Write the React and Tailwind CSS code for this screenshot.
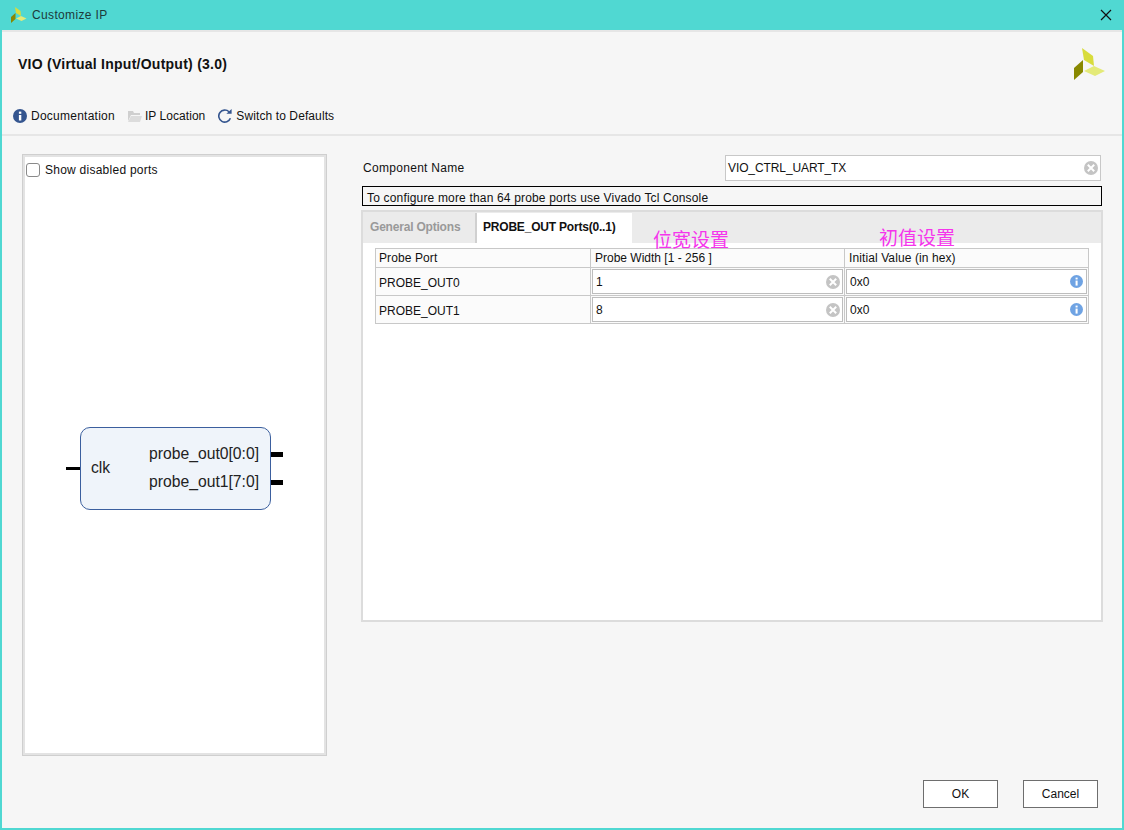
const XLogo = ({ className }) => (
  <svg viewBox="0 0 32 32" className={className}>
    <polygon points="8,0 19,8 20,18 10,12" fill="#d8dc3c" />
    <polygon points="10,23 20,18 31,23 21,28" fill="#e4ea78" />
    <polygon points="0,20 9,12 9,24 0,32" fill="#888800" />
  </svg>
);

const ClearIcon = () => (
  <svg viewBox="0 0 14 14" className="w-[14px] h-[14px] shrink-0">
    <circle cx="7" cy="7" r="7" fill="#c4c4c4" />
    <path d="M3.8 3.8 10.2 10.2M10.2 3.8 3.8 10.2" stroke="#fff" strokeWidth="2" />
  </svg>
);

const InfoBlue = () => (
  <svg viewBox="0 0 14 14" className="w-[13px] h-[13px] shrink-0">
    <circle cx="7" cy="7" r="7" fill="#6fa3e3" />
    <rect x="6" y="6" width="2.2" height="5.4" fill="#fff" />
    <rect x="6" y="2.8" width="2.2" height="2" fill="#fff" />
  </svg>
);

const Cell = ({ value, icon, pad }) => (
  <div className={`m-[1px] h-[25px] border border-[#bdbdbd] bg-white flex items-center justify-between pl-[3px] ${pad}`}>
    <span>{value}</span>
    {icon}
  </div>
);

const rows = [
  { port: "PROBE_OUT0", width: "1" },
  { port: "PROBE_OUT1", width: "8" },
];

export default function App() {
  return (
    <div className="w-[1124px] h-[830px] bg-[#f6f6f6] text-[12px] text-[#111] overflow-hidden flex flex-col border-l-[2px] border-r-[2px] border-b-[2px] border-[#50d8d2]" style={{ fontFamily: '"Liberation Sans", "Noto Sans CJK SC", sans-serif' }}>
      <div className="h-[30px] shrink-0 bg-[#50d8d2] flex items-center justify-between pl-[9px] pr-[10px]">
        <div className="flex items-center gap-[5px]">
          <XLogo className="w-[16px] h-[16px]" />
          <span className="text-[#1d3a3a] tracking-[0.35px]">Customize IP</span>
        </div>
        <svg viewBox="0 0 12 12" className="w-[12px] h-[12px]">
          <path d="M1 1 11 11M11 1 1 11" stroke="#111" strokeWidth="1.2" />
        </svg>
      </div>
      <div className="h-[2px] shrink-0 bg-[#e6e6e6]" />

      <div className="h-[72px] shrink-0 flex justify-between pl-[16px] pr-[16px]">
        <div className="font-bold text-[14px] text-[#111] pt-[22px] tracking-[0.25px]">VIO (Virtual Input/Output) (3.0)</div>
        <XLogo className="w-[32px] h-[32px] mt-[16px]" />
      </div>

      <div className="h-[32px] shrink-0 flex items-center pl-[11px] pb-[6px] border-b-2 border-[#e6e6e6]">
        <div className="flex items-center gap-[4px] mr-[12px]">
          <svg viewBox="0 0 14 14" className="w-[14px] h-[14px]">
            <circle cx="7" cy="7" r="7" fill="#34558f" />
            <rect x="5.9" y="6" width="2.4" height="5.5" fill="#fff" />
            <rect x="5.9" y="2.6" width="2.4" height="2.2" fill="#fff" />
          </svg>
          <span className="tracking-[0.25px]">Documentation</span>
        </div>
        <div className="flex items-center gap-[3px] mr-[13px]">
          <svg viewBox="0 0 15 14" className="w-[15px] h-[14px]">
            <path d="M1 2h5l1 2h6v2H4L1 12Z" fill="#cfcfcf" />
            <path d="M4 7h11l-2 6H1Z" fill="#dcdcdc" />
          </svg>
          <span className="tracking-[0.05px]">IP Location</span>
        </div>
        <div className="flex items-center gap-[4px]">
          <svg viewBox="0 0 14 14" className="w-[14px] h-[14px]" fill="none">
            <path d="M12.4 9.2A6 6 0 1 1 11 2.8" stroke="#34558f" strokeWidth="1.6" />
            <polygon points="8.4,4.8 13.6,4.8 13.6,0" fill="#34558f" />
          </svg>
          <span className="tracking-[0.1px]">Switch to Defaults</span>
        </div>
      </div>

      <div className="flex-1 flex pl-[20px] pr-[19px] pt-[18px] min-h-0">
        <div className="w-[305px] h-[602px] shrink-0 border border-[#cfcfcf]">
          <div className="h-full border-2 border-[#e3e3e3] bg-white flex flex-col">
            <label className="flex items-center gap-[5px] pl-[1px] pt-[4px] tracking-[0.25px]">
              <span className="w-[14px] h-[14px] rounded-[3px] border border-[#8a8a8a] bg-white" />
              <span>Show disabled ports</span>
            </label>
            <div className="relative flex-1">
              <div className="absolute left-[55px] top-[248px] w-[191px] h-[83px] rounded-[10px] border border-[#3b5f9e] bg-[#eff4fa] flex justify-between items-center pl-[10px] pr-[11px] pb-[2px] text-[15.7px] leading-[22px] text-[#222]">
                <span>clk</span>
                <div className="flex flex-col gap-[6px]">
                  <span>probe_out0[0:0]</span>
                  <span>probe_out1[7:0]</span>
                </div>
              </div>
              <div className="absolute left-[41px] top-[288px] w-[14px] h-[3px] bg-black" />
              <div className="absolute left-[246px] top-[273px] w-[12px] h-[5px] bg-black" />
              <div className="absolute left-[246px] top-[301px] w-[12px] h-[5px] bg-black" />
            </div>
          </div>
        </div>

        <div className="flex-1 ml-[34px] flex flex-col relative">
          <div className="h-[26px] flex items-center justify-between pl-[2px] mt-[1px] mr-[2px]">
            <span className="tracking-[0.3px]">Component Name</span>
            <div className="w-[376px] h-[26px] border border-[#c8c8c8] bg-white flex items-center justify-between pl-[2px] pr-[2px]">
              <span className="tracking-[-0.1px]">VIO_CTRL_UART_TX</span>
              <ClearIcon />
            </div>
          </div>
          <div className="mt-[5px] h-[20px] mx-[1px] border border-black flex items-center pl-[4px] pt-[3px] tracking-[0.17px]">
            To configure more than 64 probe ports use Vivado Tcl Console
          </div>
          <div className="mt-[4px] h-[412px] border-2 border-[#dcdcdc] bg-white flex flex-col">
            <div className="h-[31px] shrink-0 bg-[#ebebeb] flex items-end">
              <div className="w-[114px] h-[30px] border-r-2 border-[#d0d0d0] pl-[7px] pb-[2px] flex items-center font-bold text-[#999] tracking-[-0.2px]">General Options</div>
              <div className="w-[155px] h-[30px] bg-white pl-[6px] pb-[2px] flex items-center font-bold text-[#111] tracking-[-0.2px]">PROBE_OUT Ports(0..1)</div>
            </div>
            <div className="pt-[5px] pl-[12px]">
              <div className="grid grid-cols-[215px_254px_243px] w-[714px] border border-[#c8c8c8] bg-[#fbfbfb]">
                <div className="h-[19px] px-[3px] flex items-center border-r border-b border-[#c8c8c8] tracking-[0.1px]">Probe Port</div>
                <div className="h-[19px] px-[4px] flex items-center border-r border-b border-[#c8c8c8]">Probe Width [1 - 256 ]</div>
                <div className="h-[19px] px-[4px] flex items-center border-b border-[#c8c8c8] tracking-[0.1px]">Initial Value (in hex)</div>
                {rows.map((r, i) => [
                  <div key={r.port} className={`px-[3px] pt-[2px] flex items-center border-r border-[#c8c8c8] ${i === 0 ? "h-[28px] border-b" : "h-[27px]"}`}>{r.port}</div>,
                  <div key={r.port + "w"} className={`border-r border-[#c8c8c8] ${i === 0 ? "h-[28px] border-b" : "h-[27px]"}`}><Cell value={r.width} icon={<ClearIcon />} pad="pr-[2px]" /></div>,
                  <div key={r.port + "v"} className={`border-[#c8c8c8] ${i === 0 ? "h-[28px] border-b" : "h-[27px]"}`}><Cell value="0x0" icon={<InfoBlue />} pad="pr-[3px]" /></div>,
                ])}
              </div>
            </div>
          </div>
          <span className="absolute left-[292px] top-[76px] text-[19px] leading-[22px] text-[#f535ec]">位宽设置</span>
          <span className="absolute left-[518px] top-[74px] text-[19px] leading-[22px] text-[#f535ec]">初值设置</span>
        </div>
      </div>

      <div className="h-[28px] shrink-0 mb-[20px] flex justify-end gap-[25px] pr-[24px]">
        <button className="w-[75px] h-[28px] border border-[#6e6e6e] bg-white">OK</button>
        <button className="w-[75px] h-[28px] border border-[#6e6e6e] bg-white">Cancel</button>
      </div>
    </div>
  );
}
